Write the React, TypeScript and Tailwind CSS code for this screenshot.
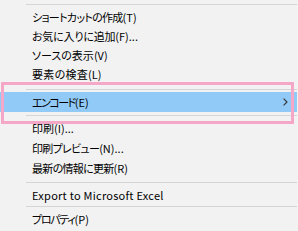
import React from 'react'

const font = "font-['Noto_Sans_CJK_JP','Noto_Sans',sans-serif] [font-feature-settings:'palt']"

function Sep({ top, bottom }: { top: string; bottom: string }) {
  return (
    <div className={`${top} ${bottom} pl-[26px] pr-[1px]`}>
      <div className="h-px bg-[#d5d5d5]" />
    </div>
  )
}

function Item({
  jp,
  suf = '',
  h = 'h-[19px]',
  track = '',
}: {
  jp: string
  suf?: string
  h?: string
  track?: string
}) {
  return (
    <div className={`flex ${h} items-center pl-[32px] text-[11px] leading-none text-black`}>
      <span className={track}>{jp}</span>
      <span>{suf}</span>
    </div>
  )
}

export default function App() {
  return (
    <div className={`relative h-[231px] w-[298px] overflow-hidden bg-[#f2f2f2] ${font}`}>
      <Sep top="pt-[4px]" bottom="pb-[3px]" />
      <Item jp="ショートカットの作成" suf="(T)" track="tracking-[-0.7px]" />
      <Item jp="お気に入りに追加" suf="(F)..." track="tracking-[-0.2px]" />
      <Item jp="ソースの表示" suf="(V)" />
      <Item jp="要素の検査" suf="(L)" track="tracking-[0.3px]" />
      <Sep top="pt-[5px]" bottom="pb-[2px]" />

      {/* highlighted row */}
      <div className="mr-[1px] flex h-[20px] items-center justify-between bg-[#91c9f7] pl-[32px] pr-[9px] text-[11px] leading-none text-black">
        <span>
          <span className="tracking-[-1.5px]">エンコード</span>
          <span>(E)</span>
        </span>
        <svg width="5" height="8" viewBox="0 0 5 8" fill="none">
          <path d="M0.6 0.6 L4 4 L0.6 7.4" stroke="#333" strokeWidth="1.1" />
        </svg>
      </div>

      <Sep top="pt-[3px]" bottom="pb-[2px]" />
      <Item jp="印刷" suf="(I)..." h="h-[20px]" />
      <Item jp="印刷プレビュー" suf="(N)..." h="h-[20px]" track="tracking-[-0.7px]" />
      <Item jp="最新の情報に更新" suf="(R)" h="h-[20px]" track="tracking-[-0.7px]" />
      <Sep top="pt-[4px]" bottom="pb-[3px]" />
      <Item jp="Export to Microsoft Excel" h="h-[18px]" track="tracking-[0.25px]" />
      <Sep top="pt-[2px]" bottom="pb-[2px]" />
      <Item jp="プロパティ" suf="(P)" h="h-[20px]" track="tracking-[-1.3px]" />

      {/* pink annotation box */}
      <div className="pointer-events-none absolute left-[1px] top-[82px] h-[42px] w-[293px] border-[3px] border-[#f4a7c6]" />
    </div>
  )
}
